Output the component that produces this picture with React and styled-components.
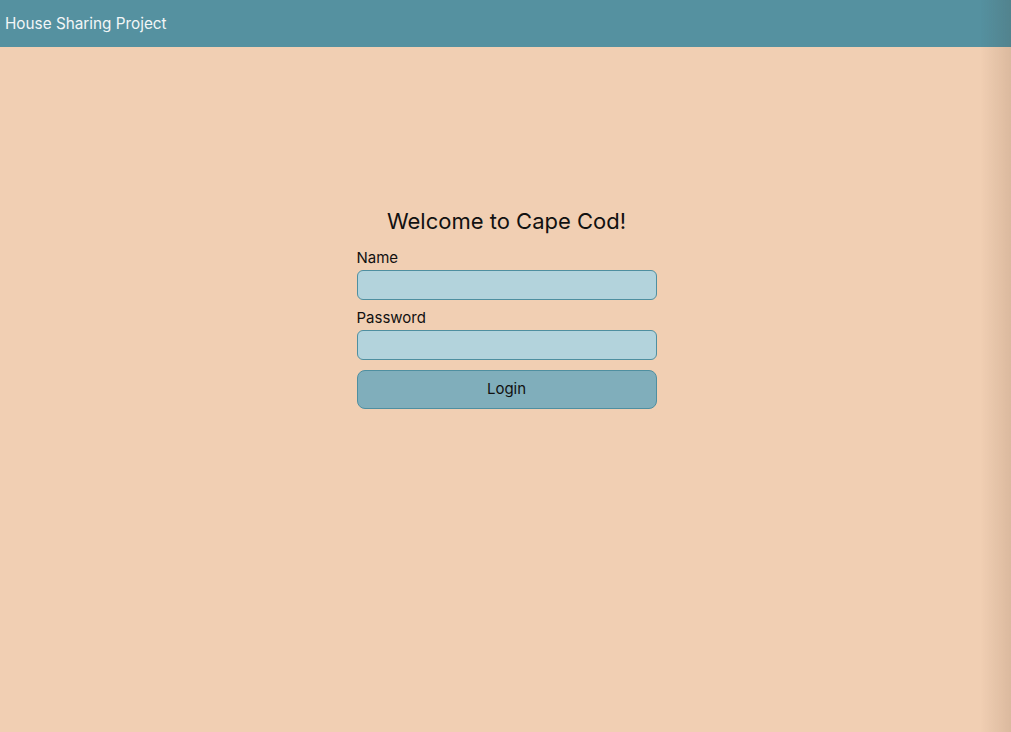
import React from "react"
import styled, { createGlobalStyle } from "styled-components"

const GlobalStyle = createGlobalStyle`
  html, body {
    margin: 0;
    padding: 0;
    height: 100%;
  }
  body {
    background-color: #f1cfb3;
    font-family: Inter, "Liberation Sans", sans-serif;
    color: #111;
  }
  body::after {
    content: "";
    position: fixed;
    top: 0;
    right: 0;
    bottom: 0;
    width: 30px;
    pointer-events: none;
    background: linear-gradient(to right, rgba(0, 0, 0, 0), rgba(60, 30, 10, 0.12));
  }
`

const Page = styled.div`
  min-height: 100vh;
  display: flex;
  flex-direction: column;
`

const TopBar = styled.header`
  height: 47px;
  background-color: #5591a0;
  display: flex;
  align-items: center;
  padding-left: 5px;
`

const Brand = styled.span`
  color: #f2f6f7;
  font-size: 15.3px;
  line-height: 19px;
`

const Main = styled.main`
  display: flex;
  justify-content: center;
  padding: 160px 0 0 2px;
`

const LoginForm = styled.form`
  width: 300px;
  display: flex;
  flex-direction: column;
`

const Title = styled.h2`
  margin: 0 0 12px;
  font-size: 22px;
  line-height: 29px;
  font-weight: 400;
  text-align: center;
  color: #111;
`

const Label = styled.label`
  display: block;
  font-size: 15px;
  line-height: 19px;
  margin-bottom: 3px;
`

const Input = styled.input`
  box-sizing: border-box;
  width: 100%;
  height: 30px;
  margin: 0 0 ${p => p.$gap || 8}px;
  padding: 0 8px;
  border: 1px solid #4f8fa0;
  border-radius: 6px;
  background-color: #b3d3dc;
  font: inherit;
  outline: none;
`

const Button = styled.button`
  box-sizing: border-box;
  width: 100%;
  height: 39px;
  padding: 0 0 3px;
  border: 1px solid #4f8fa0;
  border-radius: 8px;
  background-color: #80aebb;
  color: #111;
  font-family: inherit;
  font-size: 15px;
  cursor: pointer;
`

export default function App() {
  return (
    <>
      <GlobalStyle />
      <Page>
        <TopBar>
          <Brand>House Sharing Project</Brand>
        </TopBar>
        <Main>
          <LoginForm onSubmit={e => e.preventDefault()}>
            <Title>Welcome to Cape Cod!</Title>
            <Label htmlFor="name">Name</Label>
            <Input id="name" type="text" />
            <Label htmlFor="password">Password</Label>
            <Input id="password" type="password" $gap={10} />
            <Button type="submit">Login</Button>
          </LoginForm>
        </Main>
      </Page>
    </>
  )
}
